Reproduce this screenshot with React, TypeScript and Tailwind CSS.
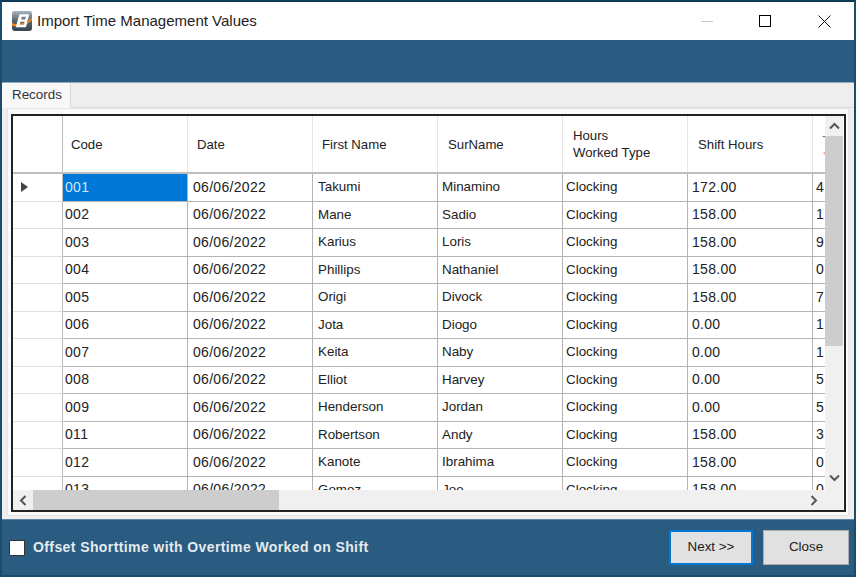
const rows = [
  ["001", "Takumi", "Minamino", "172.00", "4"],
  ["002", "Mane", "Sadio", "158.00", "1"],
  ["003", "Karius", "Loris", "158.00", "9"],
  ["004", "Phillips", "Nathaniel", "158.00", "0"],
  ["005", "Origi", "Divock", "158.00", "7"],
  ["006", "Jota", "Diogo", "0.00", "1"],
  ["007", "Keita", "Naby", "0.00", "1"],
  ["008", "Elliot", "Harvey", "0.00", "5"],
  ["009", "Henderson", "Jordan", "0.00", "5"],
  ["011", "Robertson", "Andy", "158.00", "3"],
  ["012", "Kanote", "Ibrahima", "158.00", "0"],
  ["013", "Gomez", "Joe", "158.00", "0"],
];

function Head({ children, pad = "pl-[8px]" }: { children: React.ReactNode; pad?: string }) {
  return (
    <div className={`w-[125px] shrink-0 h-full border-r border-[#e6e6e6] flex items-center leading-[17px] text-[13.2px] ${pad}`}>
      {children}
    </div>
  );
}

function Cell({ children, selected, num, pad = "pl-[4px]" }: { children: React.ReactNode; selected?: boolean; num?: boolean; pad?: string }) {
  return (
    <div
      className={`w-[125px] shrink-0 h-full border-r border-[#b4b4b4] flex items-center ${pad} ${
        num ? "text-[14px] tracking-[0.3px]" : "text-[13.4px]"
      } ${selected ? "bg-[#0078d7] text-[#cfe6f8]" : ""}`}
    >
      {children}
    </div>
  );
}

export default function App() {
  return (
    <div
      className="w-[856px] h-[577px] overflow-hidden bg-[#2a5b80] border-x-2 border-t-2 border-b-2 border-t-[#0f3a55] border-x-[#1c4b6c] border-b-[#1c4b6c] flex flex-col text-[14px] text-[#222]"
      style={{ fontFamily: '"Liberation Sans", Arial, sans-serif' }}
    >
      <div className="h-[38px] shrink-0 bg-white flex items-center">
        <svg width="20" height="20" viewBox="0 0 21 21" className="ml-[10px] shrink-0">
          <defs>
            <linearGradient id="lg" x1="0" y1="0" x2="0" y2="1">
              <stop offset="0" stopColor="#aab4bc" />
              <stop offset="0.5" stopColor="#56646f" />
              <stop offset="1" stopColor="#39454e" />
            </linearGradient>
          </defs>
          <rect x="0" y="0" width="21" height="21" rx="2.5" fill="url(#lg)" />
          <path d="M0 12.5 C5 15 14 13 21 7 L21 10 C15 15 6 17.5 0 15.5Z" fill="#e8871e" />
          <path
            fillRule="evenodd"
            d="M8 3.5 H18 L16.7 9.5 L15.5 10.5 L16 11.5 L14.7 17 H4 L5 13.5 L6.2 9 L7 6.2Z M10.2 6 L9.7 8.8 H13.9 L14.5 6Z M8.9 11.3 L8.3 14.4 H12.6 L13.3 11.3Z"
            fill="#fff"
          />
        </svg>
        <div className="ml-[5px] text-[15px] text-[#222]">Import Time Management Values</div>
        <div className="ml-auto flex items-center">
          <div className="w-[12px] h-px bg-[#c8c8c8] mr-[46px]" />
          <div className="w-[12px] h-[12px] border border-black mr-[47px]" />
          <svg width="13" height="13" viewBox="0 0 13 13" className="mr-[23px]">
            <path d="M0.5 0.5 L12.5 12.5 M12.5 0.5 L0.5 12.5" stroke="#111" strokeWidth="1" fill="none" />
          </svg>
        </div>
      </div>

      <div className="h-[43px] shrink-0 bg-[#2a5b80] border-b border-[#8fa9bd]" />

      <div className="h-[436px] shrink-0 bg-[#eeeeee] flex flex-col">
        <div className="h-[25px] shrink-0 flex items-end border-b border-[#dcdcdc]">
          <div className="w-[69px] h-[25px] -mb-px bg-[#f8f8f8] border-r border-[#dcdcdc] pl-[10px] flex items-center text-[13.4px] text-[#333]">
            Records
          </div>
        </div>
        <div className="flex-1 min-h-0 mx-[5px] mb-[3px] bg-[#fafafa] border border-[#e4e4e4] pl-[3px] pr-[2px] pt-[5px] pb-[3px] flex flex-col">
          <div className="flex-1 min-h-0 border-2 border-[#222] flex flex-col overflow-hidden bg-white">
            <div className="flex-1 min-h-0 flex">
              <div className="w-[812px] shrink-0 overflow-hidden">
                <div className="h-[58px] flex border-b-2 border-[#bdbdbd] w-[900px]">
                  <div className="w-[50px] shrink-0 h-full border-r border-[#bdbdbd]" />
                  <Head>Code</Head>
                  <Head pad="pl-[9px]">Date</Head>
                  <Head pad="pl-[9px]">First Name</Head>
                  <Head pad="pl-[10px]">SurName</Head>
                  <Head pad="pl-[10px]">
                    <span>
                      Hours
                      <br />
                      Worked Type
                    </span>
                  </Head>
                  <Head pad="pl-[10px]">Shift Hours</Head>
                  <div className="h-full pl-[9px] flex flex-col justify-center text-[#e8871e] leading-[16px]">
                    <span className="text-[#777]">-</span>
                    <span>·</span>
                  </div>
                </div>
                {rows.map((r, i) => (
                  <div key={r[0]} className="h-[27.5px] flex w-[900px]">
                    <div className="w-[50px] shrink-0 h-full border-r border-b border-[#bdbdbd] border-b-[#e2e2e2] flex items-center pl-[8px]">
                      {i === 0 && (
                        <svg width="7" height="10" viewBox="0 0 7 10">
                          <path d="M0 0 L7 5 L0 10Z" fill="#444" />
                        </svg>
                      )}
                    </div>
                    <div className="flex border-b border-[#b4b4b4]">
                      <Cell selected={i === 0} num pad="pl-[2px]">
                        {r[0]}
                      </Cell>
                      <Cell num pad="pl-[5px]">
                        06/06/2022
                      </Cell>
                      <Cell pad="pl-[5px]">{r[1]}</Cell>
                      <Cell>{r[2]}</Cell>
                      <Cell pad="pl-[3px]">Clocking</Cell>
                      <Cell num>{r[3]}</Cell>
                      <div className="pl-[3px] h-full flex items-center w-[20px]">{r[4]}</div>
                    </div>
                  </div>
                ))}
              </div>
              <div className="w-[18px] shrink-0 bg-[#f0f0f0] flex flex-col">
                <div className="h-[20px] flex items-center justify-center">
                  <svg width="11" height="8" viewBox="0 0 11 8">
                    <path d="M1 6.5 L5.5 2 L10 6.5" stroke="#555" strokeWidth="2" fill="none" />
                  </svg>
                </div>
                <div className="h-[210px] bg-[#cdcdcd]" />
                <div className="flex-1" />
                <div className="h-[21px] pb-[3px] flex items-center justify-center">
                  <svg width="11" height="8" viewBox="0 0 11 8">
                    <path d="M1 1.5 L5.5 6 L10 1.5" stroke="#555" strokeWidth="2" fill="none" />
                  </svg>
                </div>
              </div>
            </div>
            <div className="h-[20px] shrink-0 mr-px bg-[#f0f0f0] flex items-center">
              <div className="w-[20px] flex justify-center">
                <svg width="8" height="11" viewBox="0 0 8 11">
                  <path d="M6.5 1 L2 5.5 L6.5 10" stroke="#555" strokeWidth="2" fill="none" />
                </svg>
              </div>
              <div className="w-[246px] h-full bg-[#cdcdcd]" />
              <div className="flex-1" />
              <div className="w-[20px] flex justify-center mr-[19px]">
                <svg width="8" height="11" viewBox="0 0 8 11">
                  <path d="M1.5 1 L6 5.5 L1.5 10" stroke="#555" strokeWidth="2" fill="none" />
                </svg>
              </div>
            </div>
          </div>
        </div>
      </div>

      <div className="flex-1 min-h-0 border-t border-[#5c84a2] bg-[#2a5b80] flex items-center pl-[7px] pr-[5px]">
        <div className="w-[16px] h-[16px] bg-white border border-[#333] rounded-[1px] shrink-0" />
        <div className="ml-[8px] font-bold text-[14px] text-[#e4eaee] tracking-[0.4px]">
          Offset Shorttime with Overtime Worked on Shift
        </div>
        <div className="ml-auto flex items-center gap-[10px]">
          <div className="w-[84px] h-[35px] bg-[#e1e1e1] border-2 border-[#0078d7] flex items-center justify-center text-[13.4px] text-[#222]">
            Next &gt;&gt;
          </div>
          <div className="w-[86px] h-[35px] bg-[#e1e1e1] border border-[#adadad] flex items-center justify-center text-[13.4px] text-[#222]">
            Close
          </div>
        </div>
      </div>
    </div>
  );
}
